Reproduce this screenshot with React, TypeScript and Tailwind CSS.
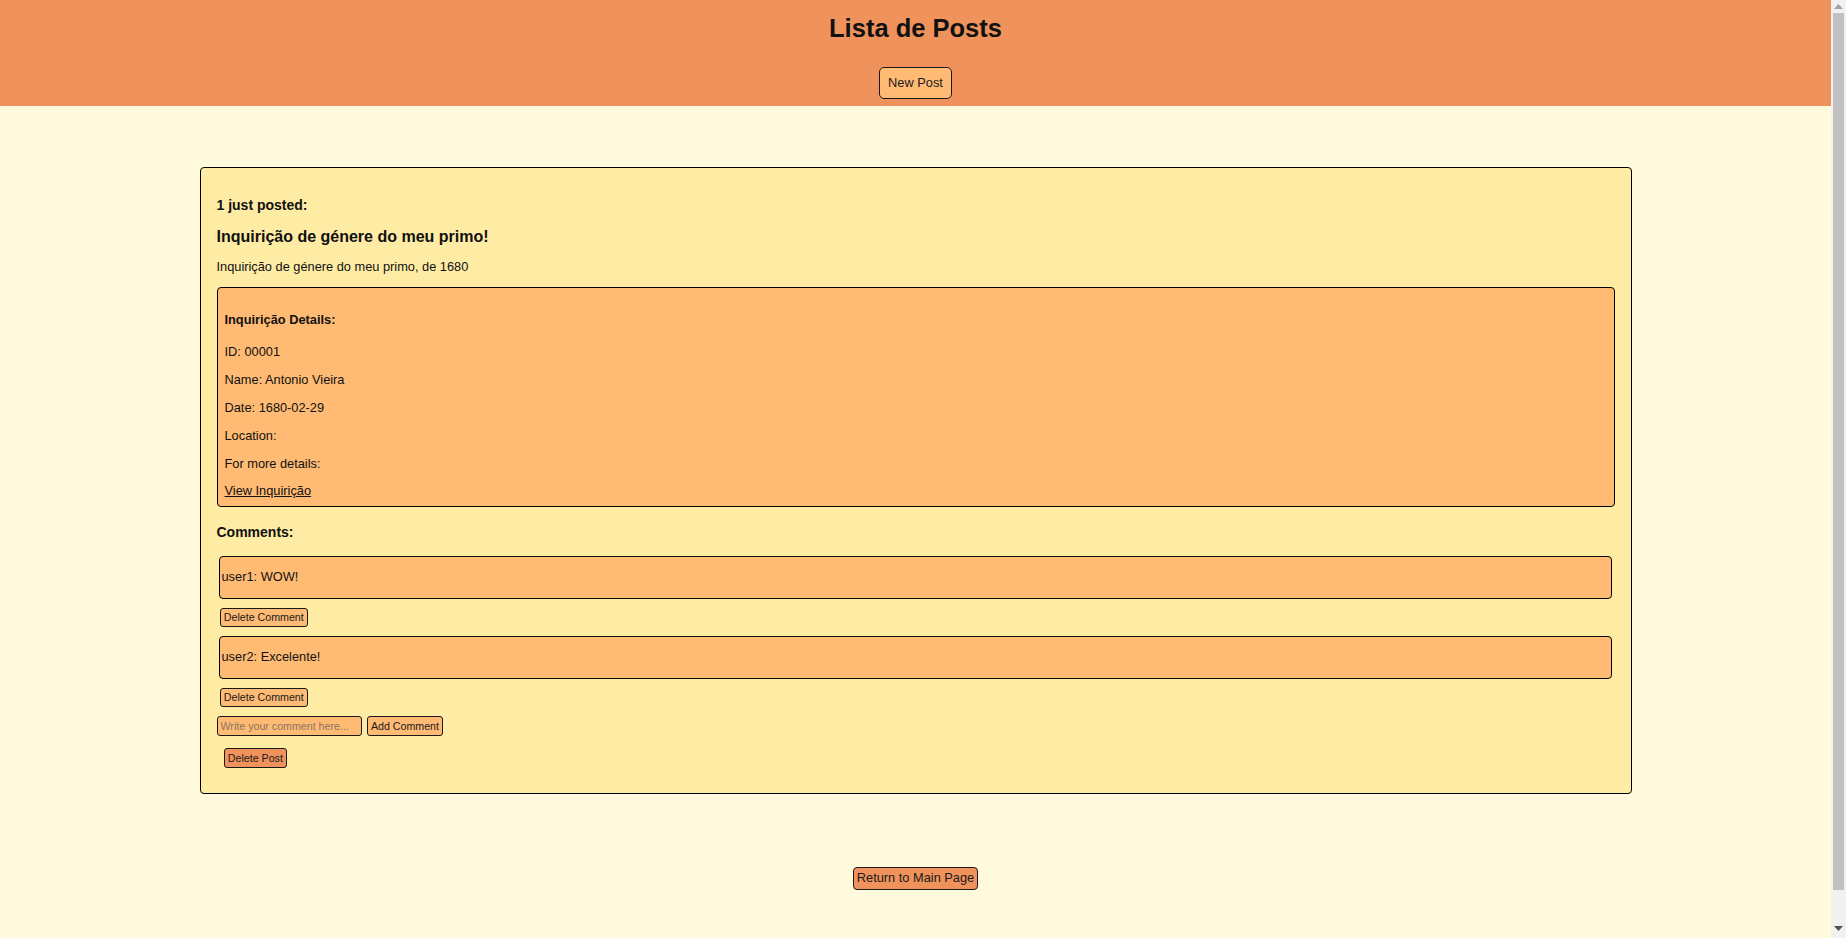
const details = [
  'ID: 00001',
  'Name: Antonio Vieira',
  'Date: 1680-02-29',
  'Location:',
  'For more details:',
];

const comments = [
  { user: 'user1', text: 'WOW!' },
  { user: 'user2', text: 'Excelente!' },
];

function SmallButton({ label, className = '' }: { label: string; className?: string }) {
  return (
    <button
      type="button"
      className={`block rounded-[3px] border border-[#1a1a1a] px-[3px] py-[2.6px] text-[10.67px] leading-[12.3px] text-[#1a1a1a] ${className}`}
    >
      {label}
    </button>
  );
}

// classic browser scrollbar seen at the right edge of the capture
function Scrollbar() {
  return (
    <div className="flex h-screen w-[15px] shrink-0 flex-col items-center bg-[#f1f1f1]">
      <svg width="9" height="6" viewBox="0 0 9 6" className="mt-[4px]">
        <path d="M4.5 0 L9 5 L0 5 Z" fill="#a3a3a3" />
      </svg>
      <div className="mt-[3px] h-[877px] w-[11px] bg-[#c1c1c1]" />
      <div className="flex-1" />
      <svg width="9" height="6" viewBox="0 0 9 6" className="mb-[6px]">
        <path d="M0 0 L9 0 L4.5 5 Z" fill="#505050" />
      </svg>
    </div>
  );
}

export default function App() {
  return (
    <div className="flex h-screen overflow-hidden bg-[#fffadb] font-['Liberation_Sans',Arial,sans-serif] text-[#111]">
      <div className="min-w-0 flex-1">
        <header className="flex flex-col items-center bg-[#ef925b] pb-[6.5px] pt-[13.8px]">
          <h1 className="text-[25.5px] font-bold leading-[29.3px]">Lista de Posts</h1>
          <button
            type="button"
            className="mt-[24px] rounded-[5px] border border-[#1a1a1a] bg-[#ffbb74] px-[8px] py-[7.8px] text-[12.8px] leading-[14.7px] text-[#1a1a1a]"
          >
            New Post
          </button>
        </header>

        <main className="flex flex-col items-center pb-[77px] pt-[61px]">
          <article className="w-[1432px] rounded-[4px] border border-black bg-[#ffeca4] px-[16px] pb-[25.7px] pt-[16px]">
            <h4 className="mt-[13.3px] text-[14px] font-bold leading-[16.1px]">1 just posted:</h4>
            <h3 className="mt-[14.4px] text-[16px] font-bold leading-[18.4px]">
              Inquirição de génere do meu primo!
            </h3>
            <p className="mt-[13.6px] text-[12.8px] leading-[14.7px]">
              Inquirição de génere do meu primo, de 1680
            </p>

            <div className="mt-[12.5px] rounded-[4px] border border-black bg-[#ffbb74] px-[7px] pb-[7px] pt-[8px] text-[12.8px] leading-[14.7px]">
              <h4 className="mt-[17.4px] font-bold">Inquirição Details:</h4>
              <p className="mt-[17px]">{details[0]}</p>
              {details.slice(1).map((line) => (
                <p key={line} className="mt-[13.2px]">
                  {line}
                </p>
              ))}
              <a href="#" className="mt-[13.2px] block w-fit underline">
                View Inquirição
              </a>
            </div>

            <h4 className="mt-[16.7px] text-[14px] font-bold leading-[16.1px]">Comments:</h4>
            <div className="mt-[15.6px]">
              {comments.map((c, i) => (
                <div key={c.user} className={i > 0 ? 'mt-[8.4px]' : ''}>
                  <div className="ml-[2px] mr-[3px] rounded-[4px] border border-black bg-[#ffbb74] px-[2px] py-[13.6px] text-[12.8px] leading-[14.7px]">
                    {c.user}: {c.text}
                  </div>
                  <SmallButton label="Delete Comment" className="ml-[3.3px] mt-[8.3px] bg-[#ffbb74]" />
                </div>
              ))}
            </div>

            <div className="mt-[9px] flex items-center gap-[5px]">
              <input
                type="text"
                placeholder="Write your comment here..."
                className="h-[19.4px] w-[145.4px] rounded-[3px] border border-[#1a1a1a] bg-[#ffbb74] px-[3px] text-[10.67px] text-[#1a1a1a] outline-none placeholder:text-[#8a7560]"
              />
              <SmallButton label="Add Comment" className="bg-[#ffbb74] px-[3.5px]" />
            </div>

            <SmallButton label="Delete Post" className="ml-[7.3px] mt-[12.6px] bg-[#ef925b]" />
          </article>

          <button
            type="button"
            className="mt-[72.3px] rounded-[4px] border border-[#1a1a1a] bg-[#ef925b] px-[2.5px] py-[3.3px] text-[12.8px] leading-[14.7px] text-[#1a1a1a]"
          >
            Return to Main Page
          </button>
        </main>
      </div>
      <Scrollbar />
    </div>
  );
}
